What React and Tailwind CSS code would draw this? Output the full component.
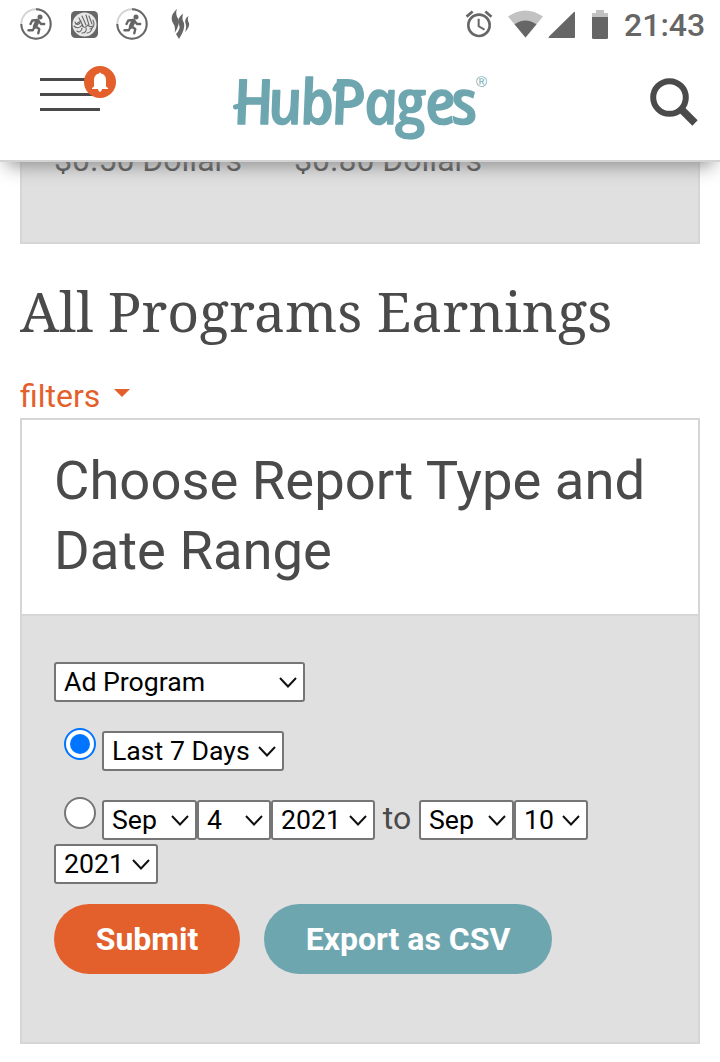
import React from "react";
import { MdAlarm } from "react-icons/md";

function RunnerIcon() {
  return (
    <svg className="h-8 w-8" viewBox="0 0 32 32" fill="none" stroke="#666" strokeWidth="2">
      <circle cx="16" cy="16" r="14.7" stroke="#d4d4d4" />
      <path d="M16 1.3A14.7 14.7 0 1 1 1.3 16" />
      <circle cx="20" cy="9" r="2.5" fill="#666" stroke="none" />
      <path d="M17.500 13L15 18.500" strokeWidth="4.4" strokeLinecap="round" />
      <path
        d="M17 12L12.300 12.500L10.500 16M18.500 13L21 16L24.200 16M15.500 18.500L19.300 21L18.300 25.300M14.500 19L12.800 22.300L8.500 22.300"
        strokeWidth="2.4"
        strokeLinecap="round"
        strokeLinejoin="round"
      />
    </svg>
  );
}

function CalligraphyIcon() {
  return (
    <svg className="h-[27px] w-[27px]" viewBox="0 0 27 27" fill="none">
      <rect width="27" height="27" rx="4.5" fill="#666" />
      <circle cx="13.5" cy="13.5" r="12" fill="#e8e8e8" />
      <g stroke="#666" strokeWidth="1.1" strokeLinecap="round">
        <path d="M4 11c1 3 3 3 5 1M8 7l4 8M11 5l4 9M15 4l3 10M18 5l3 8M22 9c2 4 1 8-3 9" />
        <path d="M3 15c3 3 6 2 8-1 1 3 4 3 6 0 1 2 3 2 5 1M6 20c2 2 5 0 5-3M11 22c3 0 5-2 4-5M16 22c3 0 5-3 5-5M5 13l5-3" />
      </g>
    </svg>
  );
}

function FlameIcon() {
  return (
    <svg className="h-[30px] w-[19px]" viewBox="0 0 19 30" fill="#666">
      <path d="M6 0Q4 5 7 9.500Q9 14 6 20L3.500 24Q5 18 2 14Q-2 7 6 0Z" />
      <path d="M12 4.500Q10.500 10 13 14Q14.500 20 8 30L5 25Q10 20 8 15.500Q5 10 12 4.500Z" />
      <path d="M17.500 7Q16 11 18 14Q19 18 14 23Q16 18 14.500 14.500Q13 10 17.500 7Z" />
    </svg>
  );
}

function StatusBar() {
  return (
    <div className="flex h-12 items-center justify-between pr-4 pl-5">
      <div className="flex items-center">
        <RunnerIcon />
        <span className="ml-[19px]">
          <CalligraphyIcon />
        </span>
        <span className="ml-[18px]">
          <RunnerIcon />
        </span>
        <span className="ml-[23px]">
          <FlameIcon />
        </span>
      </div>
      <div className="flex items-center text-[#666]">
        <MdAlarm className="mr-px h-8 w-8" />
        <svg className="ml-3 h-7 w-[35px]" viewBox="0 0 35 28">
          <path d="M0 6.500Q17.500-5.500 35 6.500L17.500 27.500Z" fill="#c2c2c2" />
          <path d="M6.500 14.300Q17.500 6.500 28.500 14.300L17.500 27.500Z" fill="#666" />
        </svg>
        <svg className="ml-[5px] h-[27px] w-[27px]" viewBox="0 0 27 27">
          <path d="M26 1Q27 0 27 2V26Q27 27 26 27H1Q0 27 1 25.500Z" fill="#666" />
        </svg>
        <svg className="ml-[17px] h-[29px] w-4" viewBox="0 0 16 29">
          <path d="M4 0h8v3h4v5H0V3h4Z" fill="#c2c2c2" />
          <path d="M0 7h16v20.500q0 1.500-1.500 1.500h-13Q0 29 0 27.500Z" fill="#666" />
        </svg>
        <span className="mt-0.5 ml-4 w-20 text-[32px] leading-8 font-medium whitespace-nowrap">21:43</span>
      </div>
    </div>
  );
}

function Logo() {
  return (
    <svg className="h-[85px] w-[280px] overflow-visible" viewBox="0 0 280 85" fill="#6ea6b0">
      <g transform="translate(0 64) skewX(9) scale(0.94 1)">
        <text
          x="17 54 88 121 156 189 221 249"
          y="0"
          fontFamily="'Open Sans', sans-serif"
          fontSize="62"
          fontStyle="italic"
          fontWeight="600"
          stroke="#6ea6b0"
          strokeWidth="1.4"
          strokeLinejoin="round"
        >
          HubPages
        </text>
      </g>
      {/* Swashes around the wordmark */}
      <g fill="none" stroke="#6ea6b0" strokeWidth="5" strokeLinecap="round">
        <path d="M15.500 47Q21 46 26 42.500" />
        <path d="M115 29Q117 24 122 22" />
      </g>
      <text x="256" y="27" fontFamily="'Liberation Sans', sans-serif" fontSize="15">
        ®
      </text>
    </svg>
  );
}

function Header() {
  return (
    <header className="relative z-10 h-[162px] border-b-2 border-[#d3d3d3] bg-white shadow-[0_10px_18px_-7px_#888]">
      <StatusBar />
      <div className="flex items-start pr-[22px] pl-10">
        <button className="relative mt-[30px] flex w-[60px] flex-col gap-3">
          <span className="h-[3px] bg-[#4a4a4a]" />
          <span className="h-[3px] bg-[#4a4a4a]" />
          <span className="h-[3px] bg-[#4a4a4a]" />
          <span className="absolute -top-3 left-11 flex h-8 w-8 items-center justify-center rounded-full bg-[#e35f2b]">
            <svg className="h-5 w-4" viewBox="0 0 16 20" fill="#fff">
              <path d="M7 1.500Q8-.5 9 1.500Q14 2.500 14 8V14.500L16 16V17H10Q9.500 20 8 20T6 17H0V16L2 14.500V8Q2 2.500 7 1.500Z" />
            </svg>
          </span>
        </button>
        <div className="mt-3 ml-[120px]">
          <Logo />
        </div>
        <svg className="mt-[30px] ml-auto h-12 w-12" viewBox="0 0 48 48" fill="none" stroke="#4a4a4a">
          <circle cx="19.500" cy="19.500" r="16.300" strokeWidth="6" />
          <path d="M30.500 30.500L45 45" strokeWidth="7.500" />
        </svg>
      </div>
    </header>
  );
}

function Select({ label, className }) {
  return (
    <span className={`relative block h-10 ${className}`}>
      <select className="block h-10 w-full appearance-none rounded-[3px] border-2 border-[#767676] bg-white pl-2 text-[26.67px] leading-9 text-black">
        <option>{label}</option>
      </select>
      <svg className="pointer-events-none absolute top-[15px] right-2 h-3 w-[18px]" viewBox="0 0 18 12" fill="none" stroke="#111" strokeWidth="2">
        <path d="M1 1L9 9.500L17 1" />
      </svg>
    </span>
  );
}

function Radio({ checked }) {
  return (
    <span
      className={`flex h-8 w-8 shrink-0 items-center justify-center rounded-full border-2 bg-white ${
        checked ? "border-[#0075ff]" : "border-[#767676]"
      }`}
    >
      {checked && <span className="h-5 w-5 rounded-full bg-[#0075ff]" />}
    </span>
  );
}

export default function App() {
  return (
    <div className="h-[1062px] overflow-hidden bg-white font-['Roboto',sans-serif] text-[#4a4a4a]">
      <Header />

      <main className="px-5">
        {/* Tail of the previous panel, scrolled under the header */}
        <section className="-mt-8 h-[114px] border-2 border-[#d6d6d6] bg-[#e0e0e0] px-8 pt-2">
          <div className="flex text-[32px] leading-[40px]">
            <span className="w-60">$0.50 Dollars</span>
            <span>$0.80 Dollars</span>
          </div>
        </section>

        <h1 className="mt-[32px] font-['Noto_Serif',serif] text-[55.35px] leading-[70px] whitespace-nowrap">
          All Programs Earnings
        </h1>

        <a href="#" className="mt-[30px] flex h-[42px] items-start text-[32px] leading-10 text-[#e35f2b]">
          filters
          <svg className="mt-[13px] ml-3.5 h-2 w-4" viewBox="0 0 16 8" fill="currentColor">
            <path d="M0 0h16L8 8Z" />
          </svg>
        </a>

        <section className="h-[626px] border-2 border-[#d6d6d6] bg-[#e0e0e0]">
          <h2 className="h-[196px] border-b-2 border-[#d6d6d6] bg-white px-8 pt-[26px] text-[54.4px] leading-[70px]">
            Choose Report Type and Date Range
          </h2>

          <form className="px-8 pt-[46px]">
            <Select label="Ad Program" className="w-[251px]" />

            <div className="mt-[26px] flex items-start pl-2.5">
              <Radio checked />
              <Select label="Last 7 Days" className="mt-[3px] ml-1.5 w-[182px]" />
            </div>

            <div className="mt-[26px] flex items-start pl-2.5">
              <Radio />
              <div className="mt-[3px] ml-1.5 flex items-center">
                <Select label="Sep" className="w-[95px]" />
                <Select label="4" className="w-[74px]" />
                <Select label="2021" className="w-[104px]" />
                <span className="w-11 pb-1 text-center text-[32px] leading-9">to</span>
                <Select label="Sep" className="w-[95px]" />
                <Select label="10" className="w-[74px]" />
              </div>
            </div>
            <Select label="2021" className="mt-1 w-[104px]" />

            <div className="mt-5 flex gap-6 text-[32px] font-bold text-white">
              <button type="button" className="h-[70px] w-[186px] rounded-full bg-[#e35f2b]">
                Submit
              </button>
              <button type="button" className="h-[70px] w-72 rounded-full bg-[#6ea6b0]">
                Export as CSV
              </button>
            </div>
          </form>
        </section>
      </main>
    </div>
  );
}
